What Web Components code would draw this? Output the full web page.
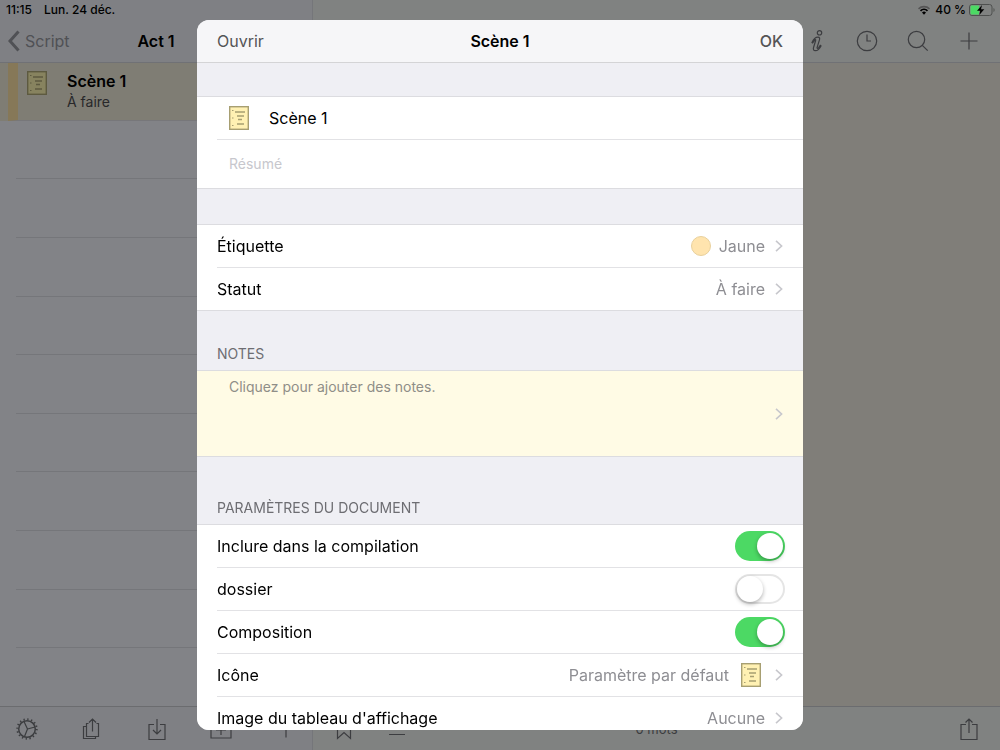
<!DOCTYPE html>
<html lang="fr">
<head>
<meta charset="utf-8">
<meta name="viewport" content="width=device-width, initial-scale=1">
<title>Scène 1</title>
<style>
  * {
    box-sizing: border-box;
  }
  body {
    margin: 0;
    min-height: 100vh;
    font-family: Inter, "Liberation Sans", sans-serif;
    font-size: 16px;
    line-height: 20px;
    color: #000;
    background-color: #818286;
  }
</style>
</head>
<body>
<writing-app>
  <side-pane slot="side" back="Script" heading="Act 1" time="11:15" date="Lun. 24 déc.">
    <binder-item title="Scène 1" status="À faire"></binder-item>
  </side-pane>
  <editor-pane slot="main" count="0 mots" battery="40 %"></editor-pane>
</writing-app>

<form-sheet heading="Scène 1">
  <cell-group style="--gap: 33px">
    <title-cell value="Scène 1"></title-cell>
    <summary-cell placeholder="Résumé"></summary-cell>
  </cell-group>
  <cell-group style="--gap: 35px">
    <link-cell label="Étiquette" value="Jaune"><color-dot slot="before"></color-dot></link-cell>
    <link-cell label="Statut" value="À faire"></link-cell>
  </cell-group>
  <cell-group heading="Notes" style="--gap: 59px">
    <notes-cell>Cliquez pour ajouter des notes.</notes-cell>
  </cell-group>
  <cell-group heading="Paramètres du document" style="--gap: 67px">
    <switch-cell label="Inclure dans la compilation" checked></switch-cell>
    <switch-cell label="dossier"></switch-cell>
    <switch-cell label="Composition" checked></switch-cell>
    <link-cell label="Icône" value="Paramètre par défaut"><script-icon slot="after"></script-icon></link-cell>
    <link-cell label="Image du tableau d'affichage" value="Aucune"></link-cell>
  </cell-group>
</form-sheet>

<script>
  const reset = `
    * {
      box-sizing: border-box;
    }
    button, input, textarea {
      margin: 0;
      padding: 0;
      border: none;
      font: inherit;
      color: inherit;
      background: none;
      text-align: left;
      outline: none;
    }
    button {
      cursor: pointer;
    }`;

  const icons = {
    back: ['12 22', '<path d="M10.5 1.5 2 11l8.500 9.500" stroke-width="3"/>'],
    chevron: ['8 12', '<path d="M1 .8 6.600 6 1 11.200" stroke-width="1.600"/>'],
    info: ['22 22', '<circle cx="14.500" cy="2.800" r="2.200"/><path d="M7 12.500C8.500 9 10.500 7.200 13 7.200c1.800 0 1.900 1.200 1.400 2.900l-2.200 7c-.5 1.500.3 1.700 1.400.5l1.700-2.200.7.500c-1.500 3-3.500 4.800-5.600 4.800-1.900 0-2.400-1.500-1.800-3.400l2-6.500c.4-1.400-.2-1.500-1-.6L7.700 13z"/>'],
    clock: ['22 22', '<circle cx="11" cy="11" r="9.700"/><path d="M11 4.500V11h4"/>'],
    search: ['22 22', '<circle cx="9.500" cy="9.500" r="8.200"/><path d="m15.300 15.300 5.400 5.400"/>'],
    plus: ['22 22', '<path d="M11 2.500v17M2.500 11h17"/>'],
    gear: ['22 22', '<circle cx="11" cy="11" r="8.300" stroke-width="1.500"/><circle cx="11" cy="11" r="9.700" stroke-width="2" stroke-dasharray="1.300 2.508"/><path d="M11.500 11 8 3.500M11.500 11l7.500-2M11.500 11 8.500 18.500"/>'],
    copies: ['22 22', '<path d="M7.500 5.500h-2v13h12v-13h-2M5.500 8.500h-3v12h12v-2M11.500 13.500V1M8 4.500 11.500 1 15 4.500"/>'],
    download: ['22 22', '<path d="M8 6.500H3v15h16v-15h-5M11 1v15M7 12l4 4 4-4"/>'],
    boxplus: ['22 22', '<path d="M1 4.500h20V20H1zM11 7v10M6 12h10"/>'],
    bookmark: ['22 22', '<path d="M4.500 2h13v18.500L11 14.500l-6.500 6z"/>'],
    lines: ['22 22', '<path d="M3 5.500h16M3 11h16M3 16.500h16"/>'],
    share: ['22 22', '<path d="M8 6.500H3v15h16v-15h-5M11 15V1M7.500 4.500 11 1l3.500 3.500"/>']
  };

  class LineIcon extends HTMLElement {
    connectedCallback() {
      const [size, shape] = icons[this.getAttribute('name')];
      const [width, height] = size.split(' ');
      this.attachShadow({ mode: 'open' }).innerHTML = `
        <style>
          :host {
            display: block;
            flex: none;
          }
          svg {
            display: block;
            fill: none;
            stroke: currentColor;
            stroke-width: 1.2;
          }
        </style>
        <svg width="${width}" height="${height}" viewBox="0 0 ${size}" aria-hidden="true">${shape}</svg>`;
    }
  }

  class ScriptIcon extends HTMLElement {
    connectedCallback() {
      this.attachShadow({ mode: 'open' }).innerHTML = `
        <style>
          :host {
            display: block;
            flex: none;
          }
          svg {
            display: block;
            fill: none;
          }
        </style>
        <svg width="20" height="24" viewBox="0 0 20 24" aria-hidden="true">
          <rect x=".7" y=".7" width="18.600" height="22.600" fill="var(--paper, #fff1b3)" stroke="var(--edge, #a79f72)" stroke-width="1.400"/>
          <path d="M6 6h10M8 10h7M9 13.500h4M8 18h7" stroke="var(--ink, #a79f72)" stroke-width="1.300"/>
          <path d="M3 4.500h1.500M3 12h1.500M3 19.500h1.500" stroke="var(--ink, #a79f72)"/>
        </svg>`;
    }
  }

  class ColorDot extends HTMLElement {
    connectedCallback() {
      this.attachShadow({ mode: 'open' }).innerHTML = `
        <style>
          :host {
            display: block;
            width: 20px;
            height: 20px;
            border: 1px solid #e8d09c;
            border-radius: 50%;
            background-color: #ffe4ae;
            box-sizing: border-box;
          }
        </style>`;
    }
  }

  class WritingApp extends HTMLElement {
    connectedCallback() {
      this.attachShadow({ mode: 'open' }).innerHTML = `
        <style>
          :host {
            display: grid;
            grid-template-columns: 313px 1fr;
            min-height: 100vh;
          }
        </style>
        <slot name="side"></slot>
        <slot name="main"></slot>`;
    }
  }

  const paneStyle = `
    :host {
      display: flex;
      flex-direction: column;
      color: #3c3d40;
    }
    header {
      border-bottom: 1px solid #707175;
    }
    .status {
      display: flex;
      align-items: center;
      height: 20px;
      font-size: 12px;
      font-weight: 500;
      color: #000;
    }
    .bar, footer {
      display: flex;
      align-items: center;
      justify-content: space-between;
      height: 42px;
    }
    footer {
      height: 44px;
      border-top: 1px solid #6b6c6f;
    }`;

  class SidePane extends HTMLElement {
    connectedCallback() {
      this.attachShadow({ mode: 'open' }).innerHTML = `
        <style>
          ${reset}
          ${paneStyle}
          :host {
            border-right: 1px solid #75767a;
            background-color: #828387;
          }
          header, footer {
            background-color: #7f8084;
          }
          .status {
            gap: 12px;
            padding: 0 6px;
          }
          .bar {
            display: grid;
            grid-template-columns: 1fr auto 1fr;
            padding: 0 8px;
          }
          .back {
            display: flex;
            align-items: center;
            gap: 5px;
            color: #505155;
          }
          h1 {
            margin: 0;
            font-size: 16px;
            font-weight: 600;
            color: #000;
          }
          .list {
            display: flex;
            flex: 1;
            flex-direction: column;
          }
          .empty {
            flex: 1;
            margin-left: 16px;
            border-bottom: 1px solid #75767a;
          }
          .empty:last-child {
            border: none;
          }
          footer {
            padding: 0 15px 0 16px;
          }
        </style>
        <header>
          <div class="status"><span>${this.getAttribute('time')}</span><span>${this.getAttribute('date')}</span></div>
          <div class="bar">
            <button class="back" type="button"><line-icon name="back"></line-icon>${this.getAttribute('back')}</button>
            <h1>${this.getAttribute('heading')}</h1>
          </div>
        </header>
        <div class="list">
          <slot></slot>
          ${'<div class="empty"></div>'.repeat(10)}
        </div>
        <footer>
          <button type="button" aria-label="Réglages"><line-icon name="gear"></line-icon></button>
          <button type="button" aria-label="Compiler"><line-icon name="copies"></line-icon></button>
          <button type="button" aria-label="Importer"><line-icon name="download"></line-icon></button>
          <button type="button" aria-label="Nouveau dossier"><line-icon name="boxplus"></line-icon></button>
          <button type="button" aria-label="Ajouter"><line-icon name="plus"></line-icon></button>
        </footer>`;
    }
  }

  class BinderItem extends HTMLElement {
    connectedCallback() {
      this.attachShadow({ mode: 'open' }).innerHTML = `
        <style>
          ${reset}
          :host {
            display: flex;
            flex: 1;
            background-color: #7f7d74;
            --paper: #87835f;
            --edge: #5d5a40;
            --ink: #5d5a40;
          }
          button {
            display: flex;
            flex: 1;
            gap: 20px;
            margin-left: 8px;
            padding: 8px 0 0 9px;
            border-left: 10px solid #867858;
            border-bottom: 1px solid #77777a;
          }
          strong, small {
            display: block;
          }
          strong {
            font-weight: 600;
            color: #000;
          }
          small {
            font-size: 14px;
            line-height: 22px;
            color: #28282a;
          }
        </style>
        <button type="button">
          <script-icon></script-icon>
          <span><strong>${this.getAttribute('title')}</strong><small>${this.getAttribute('status')}</small></span>
        </button>`;
    }
  }

  class EditorPane extends HTMLElement {
    connectedCallback() {
      this.attachShadow({ mode: 'open' }).innerHTML = `
        <style>
          ${reset}
          ${paneStyle}
          :host {
            background-color: #807e79;
          }
          header, footer {
            background-color: #808281;
          }
          .status {
            justify-content: flex-end;
            gap: 3px;
            padding: 0 5px;
          }
          .bar {
            justify-content: flex-end;
            gap: 29px;
            padding: 0 20px;
          }
          main {
            flex: 1;
          }
          footer {
            display: grid;
            grid-template-columns: 1fr auto 1fr;
            padding: 0 20px;
            font-size: 13px;
          }
          .tools {
            display: flex;
            gap: 31px;
          }
          .share {
            justify-self: end;
          }
        </style>
        <header>
          <div class="status">
            <svg width="14" height="10" viewBox="0 0 14 10" aria-hidden="true">
              <path d="M.5 3.800a8 8 0 0 1 11 0" fill="none" stroke="#555" stroke-width="1.600"/>
              <path d="M2.500 5.900a5 5 0 0 1 7 0" fill="none" stroke="#000" stroke-width="1.700"/>
              <path d="M4 7.500a3 3 0 0 1 4 0L6 9.700z"/>
            </svg>
            <span>${this.getAttribute('battery')}</span>
            <svg width="26" height="12" viewBox="0 0 26 12" aria-hidden="true">
              <rect x=".5" y=".5" width="22.500" height="11" rx="2.500" fill="none" stroke="#4e504f"/>
              <path d="M2.500 1.500H10v9H2.500a1 1 0 0 1-1-1v-7a1 1 0 0 1 1-1z" fill="#4cd964"/>
              <path d="M24.500 4c1.500.5 1.500 3.500 0 4z" fill="#4e504f"/>
              <path d="M13 1 8 6.700h3.200L10.300 11l5-5.700H12z"/>
            </svg>
          </div>
          <div class="bar">
            <button type="button" aria-label="Inspecteur"><line-icon name="info"></line-icon></button>
            <button type="button" aria-label="Historique"><line-icon name="clock"></line-icon></button>
            <button type="button" aria-label="Rechercher"><line-icon name="search"></line-icon></button>
            <button type="button" aria-label="Ajouter"><line-icon name="plus"></line-icon></button>
          </div>
        </header>
        <main></main>
        <footer>
          <div class="tools">
            <button type="button" aria-label="Signet"><line-icon name="bookmark"></line-icon></button>
            <button type="button" aria-label="Plan"><line-icon name="lines"></line-icon></button>
          </div>
          <span>${this.getAttribute('count')}</span>
          <button class="share" type="button" aria-label="Partager"><line-icon name="share"></line-icon></button>
        </footer>`;
    }
  }

  class FormSheet extends HTMLElement {
    connectedCallback() {
      this.attachShadow({ mode: 'open' }).innerHTML = `
        <style>
          ${reset}
          /* floats over the whole app */
          :host {
            position: fixed;
            inset: 0;
            display: flex;
            justify-content: center;
            padding: 20px;
          }
          section {
            display: flex;
            flex-direction: column;
            width: 100%;
            max-width: 606px;
            border-radius: 12px;
            background-color: #efeff4;
            overflow: hidden;
          }
          header {
            display: grid;
            grid-template-columns: 1fr auto 1fr;
            align-items: center;
            flex: none;
            height: 43px;
            padding: 0 20px;
            border-bottom: 1px solid #d4d4d6;
            background-color: #f6f6f8;
            color: #545456;
          }
          h2 {
            margin: 0;
            font-size: 16px;
            font-weight: 600;
            color: #000;
          }
          .ok {
            justify-self: end;
            font-weight: 500;
          }
          .body {
            flex: 1;
            overflow-y: auto;
            scrollbar-width: none;
          }
        </style>
        <section role="dialog" aria-label="${this.getAttribute('heading')}">
          <header>
            <button type="button">Ouvrir</button>
            <h2>${this.getAttribute('heading')}</h2>
            <button class="ok" type="button">OK</button>
          </header>
          <div class="body"><slot></slot></div>
        </section>`;
    }
  }

  class CellGroup extends HTMLElement {
    connectedCallback() {
      this.attachShadow({ mode: 'open' }).innerHTML = `
        <style>
          :host {
            display: block;
          }
          h3 {
            display: flex;
            align-items: flex-end;
            box-sizing: border-box;
            height: var(--gap);
            margin: 0;
            padding: 0 20px 6px;
            font-size: 14px;
            font-weight: 400;
            text-transform: uppercase;
            color: #6d6d72;
          }
          .cells {
            border-top: 1px solid #dcdce0;
            border-bottom: 1px solid #dcdce0;
            background-color: #fff;
          }
          ::slotted(:not(:last-child)) {
            --line: 1px solid #e2e2e5;
          }
        </style>
        <h3>${this.getAttribute('heading') || ''}</h3>
        <div class="cells"><slot></slot></div>`;
    }
  }

  const cellStyle = `
    :host {
      display: block;
      padding-left: 20px;
    }
    .cell {
      display: flex;
      align-items: center;
      box-sizing: content-box;
      height: 42px;
      padding-right: 18px;
      border-bottom: var(--line, none);
    }
    .label {
      flex: 1;
    }`;

  class TitleCell extends HTMLElement {
    connectedCallback() {
      this.attachShadow({ mode: 'open' }).innerHTML = `
        <style>
          ${reset}
          ${cellStyle}
          .cell {
            gap: 20px;
            padding-left: 12px;
          }
          input {
            flex: 1;
          }
        </style>
        <div class="cell">
          <script-icon></script-icon>
          <input type="text" aria-label="Titre" value="${this.getAttribute('value')}">
        </div>`;
    }
  }

  class SummaryCell extends HTMLElement {
    connectedCallback() {
      this.attachShadow({ mode: 'open' }).innerHTML = `
        <style>
          ${reset}
          :host {
            display: block;
          }
          textarea {
            display: block;
            width: 100%;
            height: 48px;
            padding: 14px 32px;
            font-size: 14px;
            resize: none;
          }
          textarea::placeholder {
            color: #c7c7cd;
          }
        </style>
        <textarea aria-label="Résumé" placeholder="${this.getAttribute('placeholder')}"></textarea>`;
    }
  }

  class LinkCell extends HTMLElement {
    connectedCallback() {
      this.attachShadow({ mode: 'open' }).innerHTML = `
        <style>
          ${reset}
          ${cellStyle}
          :host {
            display: flex;
          }
          .cell {
            flex: 1;
            padding-right: 20px;
          }
          .value {
            display: flex;
            align-items: center;
            gap: 8px;
            margin-right: 10px;
            color: #8e8e93;
          }
          ::slotted(script-icon) {
            margin: 0 4px;
          }
          line-icon {
            color: #c7c7cc;
          }
        </style>
        <button class="cell" type="button">
          <span class="label">${this.getAttribute('label')}</span>
          <span class="value"><slot name="before"></slot>${this.getAttribute('value')}<slot name="after"></slot></span>
          <line-icon name="chevron"></line-icon>
        </button>`;
    }
  }

  class NotesCell extends HTMLElement {
    connectedCallback() {
      this.attachShadow({ mode: 'open' }).innerHTML = `
        <style>
          ${reset}
          :host {
            display: block;
            background-color: #fffbe5;
          }
          button {
            display: flex;
            align-items: center;
            justify-content: space-between;
            width: 100%;
            height: 85px;
            padding: 0 20px 0 32px;
            font-size: 14px;
            color: #8f8e88;
          }
          span {
            align-self: flex-start;
            margin-top: 6px;
          }
          line-icon {
            color: #c7c7cc;
          }
        </style>
        <button type="button"><span><slot></slot></span><line-icon name="chevron"></line-icon></button>`;
    }
  }

  class SwitchCell extends HTMLElement {
    connectedCallback() {
      this.attachShadow({ mode: 'open' }).innerHTML = `
        <style>
          ${reset}
          ${cellStyle}
          input {
            display: flex;
            appearance: none;
            width: 50px;
            height: 30px;
            padding: 2px;
            border-radius: 15px;
            box-shadow: inset 0 0 0 2px #e5e5e5;
          }
          input::before {
            content: "";
            width: 26px;
            height: 26px;
            border-radius: 50%;
            background-color: #fff;
            box-shadow: 0 2px 4px rgba(0, 0, 0, .3);
          }
          input:checked {
            justify-content: flex-end;
            background-color: #4cd964;
            box-shadow: none;
          }
        </style>
        <div class="cell">
          <label class="label" for="toggle">${this.getAttribute('label')}</label>
          <input id="toggle" type="checkbox" role="switch" ${this.hasAttribute('checked') ? 'checked' : ''}>
        </div>`;
    }
  }

  customElements.define('line-icon', LineIcon);
  customElements.define('script-icon', ScriptIcon);
  customElements.define('color-dot', ColorDot);
  customElements.define('writing-app', WritingApp);
  customElements.define('side-pane', SidePane);
  customElements.define('binder-item', BinderItem);
  customElements.define('editor-pane', EditorPane);
  customElements.define('form-sheet', FormSheet);
  customElements.define('cell-group', CellGroup);
  customElements.define('title-cell', TitleCell);
  customElements.define('summary-cell', SummaryCell);
  customElements.define('link-cell', LinkCell);
  customElements.define('notes-cell', NotesCell);
  customElements.define('switch-cell', SwitchCell);
</script>
</body>
</html>
